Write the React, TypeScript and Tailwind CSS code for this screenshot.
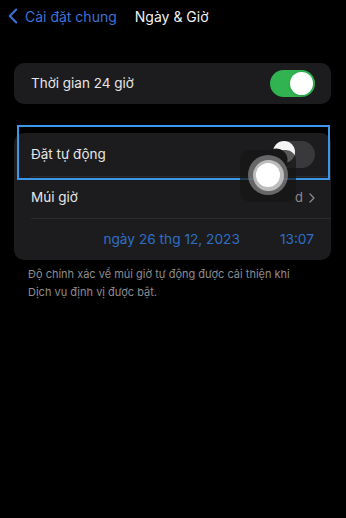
import type { FC } from "react";

const font = { fontFamily: "Inter, 'Noto Sans', sans-serif" };

const Chevron: FC<{ className?: string }> = ({ className }) => (
  <svg viewBox="0 0 12 20" className={className} fill="none" stroke="currentColor">
    <path d="M10 2 2 10l8 8" strokeWidth="2.6" strokeLinecap="round" strokeLinejoin="round" />
  </svg>
);

const ToggleOn: FC = () => (
  <div className="w-[45px] h-[27px] rounded-full bg-[#30b350] p-[2px] flex justify-end">
    <div className="w-[23px] h-[23px] rounded-full bg-white shadow" />
  </div>
);

// off toggle, knob partially smeared by the tap
const ToggleOff: FC = () => (
  <svg viewBox="0 0 45 27" className="w-[45px] h-[27px]">
    <rect x="0" y="0" width="45" height="27" rx="13.5" fill="#39393c" />
    <rect x="0" y="0" width="22" height="27" rx="13" fill="#1c1c1e" />
    <circle cx="14" cy="11" r="11" fill="#f4f4f4" />
    <circle cx="6" cy="19" r="11.5" fill="#1c1c1e" />
  </svg>
);

export default function App() {
  return (
    <div className="relative w-[346px] h-[518px] bg-black overflow-hidden text-white" style={font}>
      {/* nav bar */}
      <div className="h-[32px] flex items-center pl-[8px]">
        <Chevron className="w-[10px] h-[16px] text-[#3b74d6]" />
        <span className="ml-[7px] text-[14px] text-[#3b74d6]">Cài đặt chung</span>
        <span className="ml-[18px] text-[14px] text-[#f2f2f2]">Ngày &amp; Giờ</span>
      </div>

      {/* 24h */}
      <div className="mt-[31px] ml-[14px] w-[317px] h-[41px] rounded-[10px] bg-[#1c1c1e] flex items-center justify-between pl-[17px] pr-[16px]">
        <span className="text-[13.5px] text-[#e6e6e6]">Thời gian 24 giờ</span>
        <ToggleOn />
      </div>

      {/* auto / timezone / date */}
      <div className="mt-[29px] ml-[14px] w-[317px] rounded-[10px] bg-[#1c1c1e] overflow-hidden">
        <div className="h-[43px] flex items-center justify-between pl-[17px] pr-[16px]">
          <span className="text-[13.5px] text-[#e6e6e6]">Đặt tự động</span>
          <ToggleOff />
        </div>
        <div className="ml-[17px] border-t border-[#2c2c2e]" />
        <div className="h-[41px] flex items-center justify-between pl-[17px] pr-[16px]">
          <span className="text-[13.5px] text-[#e6e6e6]">Múi giờ</span>
          <div className="flex items-center gap-[6px] text-[#8a8a8e]">
            <span className="text-[13px]">d</span>
            <Chevron className="w-[6px] h-[10px] rotate-180" />
          </div>
        </div>
        <div className="ml-[17px] border-t border-[#2c2c2e]" />
        <div className="h-[41px] flex items-center justify-end pr-[17px] text-[13.7px] text-[#2f6fc4]">
          <span>ngày 26 thg 12, 2023</span>
          <span className="ml-[40px]">13:07</span>
        </div>
      </div>

      {/* footer */}
      <p className="mt-[5px] px-[28px] text-[11px] leading-[18px] text-[#8c8c90]">
        Độ chính xác về múi giờ tự động được cải thiện khi
        <br />
        Dịch vụ định vị được bật.
      </p>

      {/* highlight box */}
      <div className="absolute left-[17px] top-[125px] w-[313px] h-[55px] border-2 border-[#3d97e8]" />

      {/* touch indicator */}
      <div className="absolute left-[240px] top-[150px] w-[56px] h-[52px] rounded-[10px] bg-[#151516]/70" />
      <div className="absolute left-[248px] top-[155px] w-[40px] h-[40px] rounded-full bg-[#8a8a8c]/70 flex items-center justify-center">
        <div className="w-[31px] h-[31px] rounded-full bg-[#bdbdbd] flex items-center justify-center">
          <div className="w-[24px] h-[24px] rounded-full bg-white" />
        </div>
      </div>
    </div>
  );
}
